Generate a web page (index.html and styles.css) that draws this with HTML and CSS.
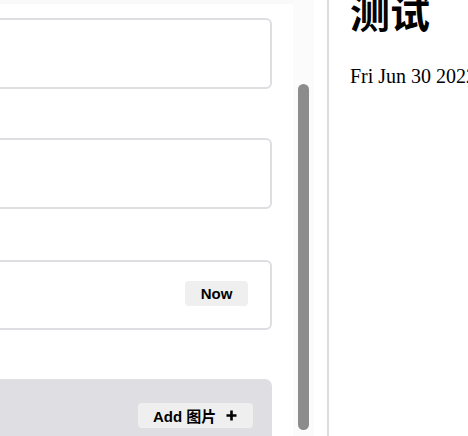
FILE: index.html
```html
<!DOCTYPE html>
<html>
<head>
<meta charset="utf-8">
<link rel="stylesheet" href="styles.css">
</head>
<body>
<div class="page">
  <div class="left">
    <div class="left-content">
      <div class="fields">
        <div class="field"></div>
        <div class="field"></div>
        <div class="field field-date"><button class="btn btn-now">Now</button></div>
        <div class="dropzone">
          <button class="btn btn-add">Add 图片<svg class="plus" width="11" height="11" viewBox="0 0 11 11"><path d="M5.5 0.5v10M0.5 5.5h10" stroke="#000" stroke-width="2.6" fill="none"/></svg></button>
        </div>
      </div>
    </div>
    <div class="track"><div class="thumb"></div></div>
  </div>
  <div class="gutter"></div>
  <div class="divider"></div>
  <div class="right">
    <h1 class="title">测试</h1>
    <p class="date">Fri Jun 30 2022</p>
  </div>
</div>
</body>
</html>
```

FILE: styles.css
```css
html, body {
  margin: 0;
  padding: 0;
  background: #ffffff;
}
.page {
  width: 468px;
  height: 436px;
  overflow: hidden;
  display: flex;
}
.left {
  width: 314px;
  flex: 0 0 314px;
  display: flex;
}
.left-content {
  flex: 1;
  overflow: hidden;
  border-top: 4px solid #f9f9fa;
}
.fields {
  margin-left: -12px;
  padding-right: 21px;
  padding-top: 14px;
  display: flex;
  flex-direction: column;
  gap: 49px;
}
.field {
  box-sizing: border-box;
  height: 71px;
  border: 2px solid #dedee2;
  border-radius: 6px;
  background: #ffffff;
}
.field-date {
  margin-top: 2px;
  height: 70px;
  display: flex;
  justify-content: flex-end;
  align-items: center;
  padding-right: 22px;
  padding-bottom: 3px;
}
.dropzone {
  height: 80px;
  background: #dfdfe3;
  border-radius: 7px 7px 0 0;
  display: flex;
  justify-content: flex-end;
  align-items: flex-start;
  padding-top: 24px;
  padding-right: 19px;
}
.btn {
  height: 25px;
  border: none;
  border-radius: 4px;
  background: #efefef;
  font-family: "Liberation Sans", "Noto Sans CJK SC", sans-serif;
  font-weight: bold;
  font-size: 15px;
  color: #000;
  display: flex;
  align-items: center;
  padding: 0;
}
.btn-now {
  width: 63px;
  justify-content: center;
}
.btn-add {
  width: 115px;
  padding-left: 15px;
}
.plus {
  margin-left: 10px;
}
.track {
  width: 21px;
  flex: 0 0 21px;
  background: #fbfbfb;
  padding-top: 84px;
  box-sizing: border-box;
}
.thumb {
  width: 11px;
  height: 346px;
  margin-left: 5px;
  background: #8c8c8c;
  border-radius: 6px;
}
.gutter {
  width: 13px;
  flex: 0 0 13px;
}
.divider {
  width: 2px;
  flex: 0 0 2px;
  background: #dcdce0;
}
.right {
  flex: 1;
  padding-left: 21px;
  font-family: "Liberation Serif", "Noto Sans CJK SC", serif;
  white-space: nowrap;
}
.title {
  font-family: "Liberation Sans", "Noto Sans CJK SC", sans-serif;
  font-size: 40px;
  font-weight: bold;
  line-height: 48px;
  margin: -10px 0 0 0;
}
.date {
  font-size: 20px;
  line-height: 24px;
  margin: 26px 0 0 0;
}
```
